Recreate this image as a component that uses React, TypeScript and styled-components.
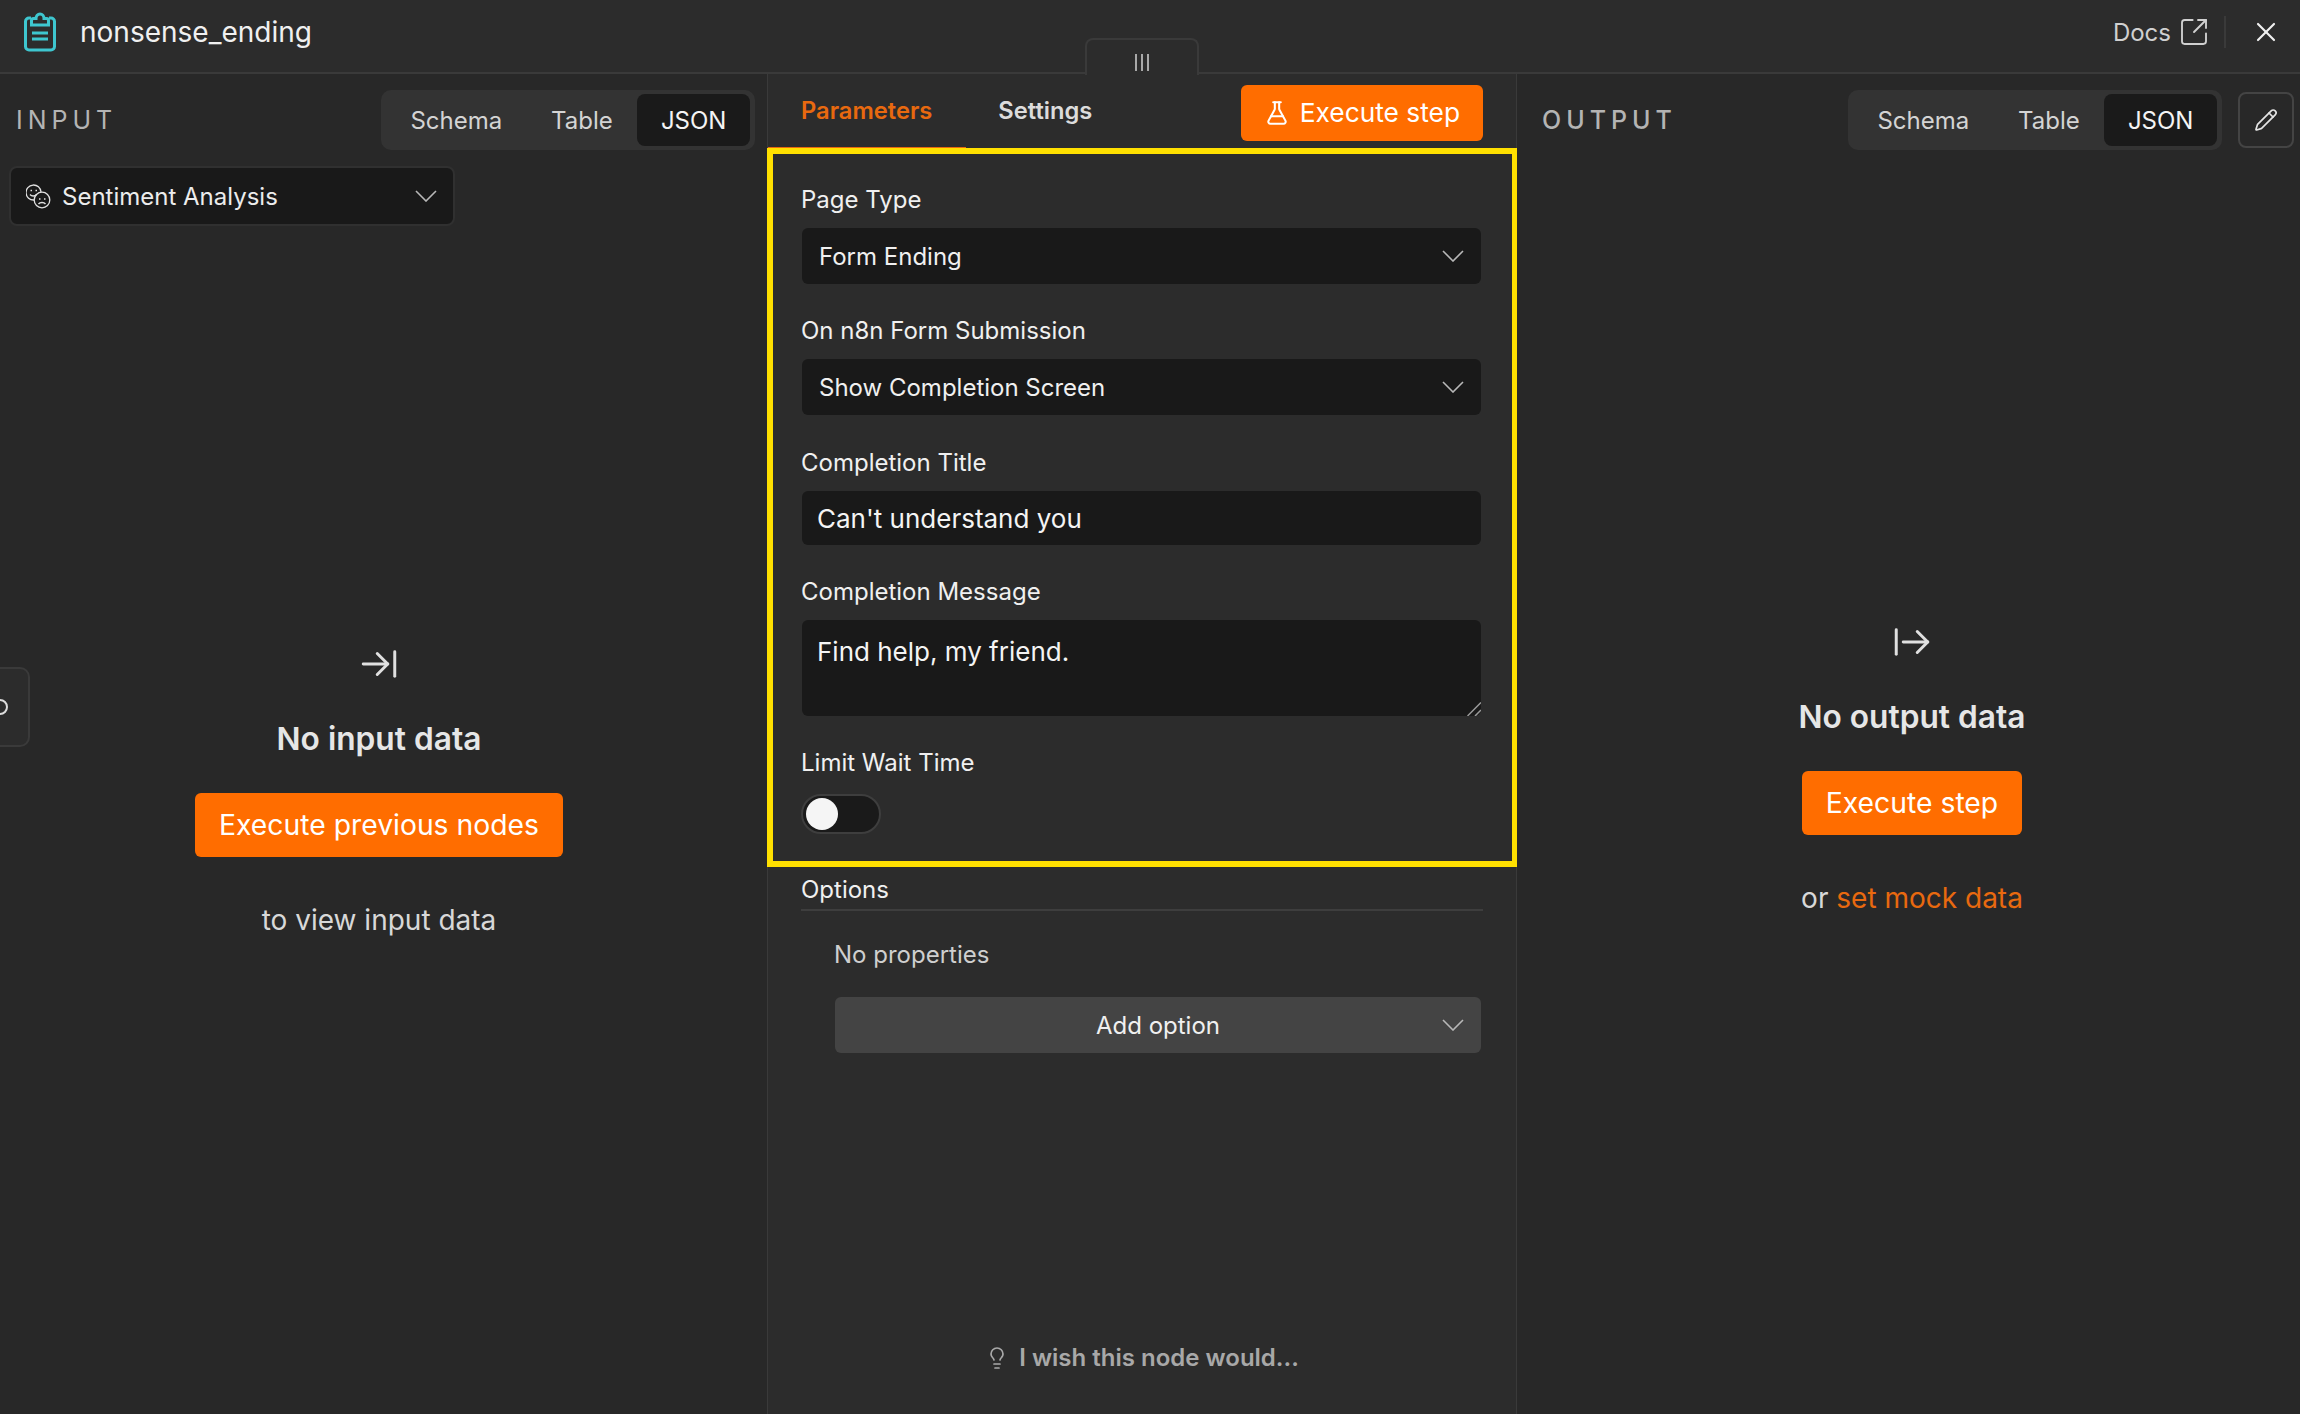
import React from "react";
import styled, { createGlobalStyle } from "styled-components";
import {
  ArrowRightFromLine,
  ArrowRightToLine,
  FlaskConical,
  Lightbulb,
  Pencil,
  SquareArrowOutUpRight,
  X,
} from "lucide-react";

const GlobalStyle = createGlobalStyle`
  html, body {
    margin: 0;
    height: 100%;
    overflow: hidden;
    background: #2c2c2c;
  }
  body, input, textarea {
    font-family: Inter, "Liberation Sans", sans-serif;
  }
  * {
    box-sizing: border-box;
  }
`;

const Page = styled.div`
  position: relative;
  width: 2300px;
  height: 1414px;
  display: flex;
  flex-direction: column;
  background: #2c2c2c;
  color: #f0f0f0;
  font-size: 24px;
  overflow: hidden;
`;

const TopBar = styled.header`
  position: relative;
  flex: none;
  height: 74px;
  display: flex;
  align-items: center;
  justify-content: space-between;
  padding: 0 18px 8px 24px;
  border-bottom: 2px solid #3a3a3a;
`;

const TitleGroup = styled.div`
  display: flex;
  align-items: center;
  gap: 24px;
`;

const NodeTitle = styled.div`
  font-size: 28px;
  color: #f0f0f0;
`;

const TopActions = styled.div`
  display: flex;
  align-items: center;
`;

const DocsLink = styled.div`
  display: flex;
  align-items: center;
  gap: 7px;
  color: #d0d0d0;
  padding-right: 14px;
  border-right: 2px solid #3a3a3a;
  height: 32px;
`;

const CloseIcon = styled(X)`
  margin-left: 24px;
  color: #f0f0f0;
`;

const DragHandle = styled.div`
  position: absolute;
  left: 1085px;
  top: 38px;
  width: 114px;
  height: 37px;
  display: flex;
  justify-content: center;
  align-items: center;
  gap: 4px;
  padding-top: 10px;
  background: #2c2c2c;
  border: 2px solid #3a3a3a;
  border-bottom: none;
  border-radius: 8px 8px 0 0;
`;

const HandleLine = styled.span`
  width: 2px;
  height: 17px;
  background: #a8a8a8;
`;

const Columns = styled.div`
  flex: 1;
  display: flex;
  min-height: 0;
`;

const SidePanel = styled.section<{ $width: number; $left: number; $right: number }>`
  width: ${(p) => p.$width}px;
  flex: none;
  display: flex;
  flex-direction: column;
  background: #282828;
  padding: 16px ${(p) => p.$right}px 0 ${(p) => p.$left}px;
`;

const PanelHead = styled.div`
  display: flex;
  align-items: center;
  justify-content: space-between;
`;

const PanelTitle = styled.div<{ $bright?: boolean }>`
  font-size: 25px;
  letter-spacing: 5px;
  color: #b4b4b4;
  font-weight: ${(p) => (p.$bright ? 500 : 400)};
`;

const HeadRight = styled.div`
  display: flex;
  align-items: center;
  gap: 16px;
`;

const Tabs = styled.div`
  width: 374px;
  height: 60px;
  display: flex;
  align-items: center;
  justify-content: flex-end;
  padding: 0 5px;
  background: #333333;
  border-radius: 10px;
`;

const Tab = styled.div<{ $active?: boolean; $width: number }>`
  width: ${(p) => p.$width}px;
  height: 52px;
  display: flex;
  align-items: center;
  justify-content: center;
  border-radius: 8px;
  color: ${(p) => (p.$active ? "#f4f4f4" : "#d4d4d4")};
  background: ${(p) => (p.$active ? "#1a1a1a" : "transparent")};
`;

const EditButton = styled.div`
  width: 56px;
  height: 56px;
  display: flex;
  align-items: center;
  justify-content: center;
  margin-right: 1px;
  border: 2px solid #444444;
  border-radius: 8px;
  color: #e4e4e4;
`;

const NodePicker = styled.div`
  width: 446px;
  height: 60px;
  margin: 16px 0 0 -7px;
  display: flex;
  align-items: center;
  gap: 11px;
  padding: 0 16px 0 15px;
  background: #191919;
  border: 2px solid #303030;
  border-radius: 8px;
  color: #ececec;
`;

const PickerText = styled.span`
  flex: 1;
`;

const EmptyState = styled.div<{ $top: number }>`
  display: flex;
  flex-direction: column;
  align-items: center;
  margin: ${(p) => p.$top}px 13px 0 0;
`;

const EmptyTitle = styled.div`
  margin-top: 34px;
  font-size: 31.7px;
  font-weight: 600;
  color: #e6e6e6;
`;

const PrimaryButton = styled.div`
  margin-top: 35px;
  height: 64px;
  padding: 0 24px;
  display: flex;
  align-items: center;
  background: #ff6d00;
  border-radius: 6px;
  color: #ffffff;
  font-size: 28.3px;
`;

const EmptyHint = styled.div`
  margin-top: 46px;
  font-size: 28px;
  color: #d8d8d8;
`;

const Accent = styled.span`
  color: #e8690f;
`;

const CenterPanel = styled.section`
  width: 750px;
  flex: none;
  display: flex;
  flex-direction: column;
  background: #2c2c2c;
  border-left: 1px solid #3a3a3a;
  border-right: 1px solid #3a3a3a;
`;

const CenterHead = styled.div`
  height: 73px;
  flex: none;
  display: flex;
  align-items: center;
  padding: 0 33px;
`;

const ModeTab = styled.div<{ $active?: boolean }>`
  margin-right: 66px;
  font-size: 23.7px;
  font-weight: 600;
  color: ${(p) => (p.$active ? "#e8690f" : "#dcdcdc")};
`;

const ActiveMark = styled.div`
  flex: none;
  width: 198px;
  height: 1px;
  background: #e8690f;
`;

const ExecuteButton = styled(PrimaryButton)`
  margin: 4px 0 0 auto;
  height: 56px;
  padding: 0 23px;
  gap: 10px;
  font-size: 26.3px;
`;

const Highlight = styled.div`
  margin: 0 -3px 0 -1px;
  height: 719px;
  flex: none;
  display: flex;
  flex-direction: column;
  padding: 31px 31px 0 28px;
  border: 6px solid #ffe000;
  border-right-width: 7px;
`;

const FieldLabel = styled.div`
  height: 30px;
  line-height: 30px;
  margin-bottom: 13px;
`;

const SelectBox = styled.div<{ $gap: number }>`
  height: 56px;
  margin: 0 0 ${(p) => p.$gap}px 1px;
  flex: none;
  display: flex;
  align-items: center;
  justify-content: space-between;
  padding: 0 17px;
  background: #191919;
  border-radius: 6px;
  color: #f0f0f0;
`;

const TextField = styled.input`
  height: 54px;
  margin: 0 0 32px 1px;
  padding: 0 15px;
  flex: none;
  border: none;
  outline: none;
  border-radius: 6px;
  background: #191919;
  color: #f4f4f4;
  font-size: 26px;
`;

const TextBlockWrap = styled.div`
  position: relative;
  height: 96px;
  margin: 0 0 32px 1px;
  flex: none;
`;

const TextBlock = styled.textarea`
  display: block;
  width: 100%;
  height: 100%;
  padding: 16px 15px;
  border: none;
  outline: none;
  border-radius: 6px;
  background: #191919;
  color: #f4f4f4;
  font-size: 26px;
  resize: none;
`;

const ResizeGrip = styled.svg`
  position: absolute;
  right: 0;
  bottom: 0;
`;

const Switch = styled.div`
  width: 80px;
  height: 40px;
  margin-top: 3px;
  display: flex;
  align-items: center;
  padding: 0 3px;
  background: #1a1a1a;
  border: 2px solid #3e3e3e;
  border-radius: 20px;
`;

const Knob = styled.span`
  width: 32px;
  height: 32px;
  border-radius: 50%;
  background: #f5f5f5;
`;

const OptionsBlock = styled.div`
  padding: 8px 33px 0;
`;

const OptionsTitle = styled.div`
  height: 36px;
  line-height: 30px;
  border-bottom: 2px solid #3e3e3e;
`;

const NoProps = styled.div`
  margin: 29px 0 0 33px;
  height: 30px;
  line-height: 30px;
  color: #cfcfcf;
`;

const AddOption = styled.div`
  position: relative;
  height: 56px;
  margin: 27px 2px 0 34px;
  display: flex;
  align-items: center;
  justify-content: center;
  background: #444444;
  border-radius: 6px;
  color: #f0f0f0;
`;

const AddChevron = styled.span`
  position: absolute;
  right: 17px;
  display: flex;
`;

const Feedback = styled.div`
  margin-top: auto;
  margin-bottom: 42px;
  display: flex;
  justify-content: center;
  align-items: center;
  gap: 10px;
  font-weight: 600;
  color: #a8a8a8;
`;

const SideTab = styled.div`
  position: absolute;
  left: -10px;
  top: 667px;
  width: 40px;
  height: 80px;
  display: flex;
  align-items: center;
  background: #2c2c2c;
  border: 2px solid #3a3a3a;
  border-radius: 10px;
  overflow: hidden;
`;

const SideGlyph = styled.span`
  width: 16px;
  height: 16px;
  border: 2px solid #dcdcdc;
  border-radius: 50%;
`;

function Chevron() {
  return (
    <svg width="22" height="12" viewBox="0 0 22 12" fill="none">
      <path d="M1 1l10 10L21 1" stroke="#b8b8b8" strokeWidth="1.6" />
    </svg>
  );
}

function ClipboardIcon() {
  return (
    <svg width="32" height="40" viewBox="0 0 32 40" fill="none" stroke="#3ec6cf" strokeWidth="3">
      <path d="M7 6H5a3.500 3.500 0 0 0-3.500 3.500v25A3.500 3.500 0 0 0 5 38h22a3.500 3.500 0 0 0 3.500-3.500v-25A3.500 3.500 0 0 0 27 6h-2" />
      <path d="M7.500 13V8.500a2 2 0 0 1 2-2h2.500a4 4.500 0 0 1 8 0h2.500a2 2 0 0 1 2 2V13z" />
      <path d="M8 21h16M8 27h16" />
    </svg>
  );
}

function SentimentIcon() {
  return (
    <svg width="25" height="26" viewBox="0 0 25 26" fill="none" stroke="#e0e0e0" strokeWidth="1.300">
      <path d="M8 17A7.500 7.500 0 1 1 15 9" />
      <circle cx="16" cy="17" r="7.800" />
      <path d="M4 11.500c1.500 2 5 2 6.500 0M4.500 7.500h1.500M9.500 7.500h1.500" />
      <path d="M12.500 21c1.500-2 5.500-2 7 0M13 16h1.500M18 16h1.500" />
    </svg>
  );
}

export default function App() {
  return (
    <Page>
      <GlobalStyle />
      <TopBar>
        <TitleGroup>
          <ClipboardIcon />
          <NodeTitle>nonsense_ending</NodeTitle>
        </TitleGroup>
        <TopActions>
          <DocsLink>
            Docs
            <SquareArrowOutUpRight size={32} strokeWidth={1.4} />
          </DocsLink>
          <CloseIcon size={32} strokeWidth={1.6} />
        </TopActions>
      </TopBar>
      <DragHandle>
        <HandleLine />
        <HandleLine />
        <HandleLine />
      </DragHandle>
      <SideTab>
        <SideGlyph />
      </SideTab>

      <Columns>
        <SidePanel $width={767} $left={16} $right={12}>
          <PanelHead>
            <PanelTitle>INPUT</PanelTitle>
            <Tabs>
              <Tab $width={141}>Schema</Tab>
              <Tab $width={111}>Table</Tab>
              <Tab $width={113} $active>
                JSON
              </Tab>
            </Tabs>
          </PanelHead>
          <NodePicker>
            <SentimentIcon />
            <PickerText>Sentiment Analysis</PickerText>
            <Chevron />
          </NodePicker>
          <EmptyState $top={417}>
            <ArrowRightToLine size={42} strokeWidth={1.7} color="#e0e0e0" />
            <EmptyTitle>No input data</EmptyTitle>
            <PrimaryButton>Execute previous nodes</PrimaryButton>
            <EmptyHint>to view input data</EmptyHint>
          </EmptyState>
        </SidePanel>

        <CenterPanel>
          <CenterHead>
            <ModeTab $active>Parameters</ModeTab>
            <ModeTab>Settings</ModeTab>
            <ExecuteButton>
              <FlaskConical size={26} strokeWidth={1.9} />
              Execute step
            </ExecuteButton>
          </CenterHead>
          <ActiveMark />
          <Highlight>
            <FieldLabel>Page Type</FieldLabel>
            <SelectBox $gap={32}>
              Form Ending
              <Chevron />
            </SelectBox>
            <FieldLabel>On n8n Form Submission</FieldLabel>
            <SelectBox $gap={33}>
              Show Completion Screen
              <Chevron />
            </SelectBox>
            <FieldLabel>Completion Title</FieldLabel>
            <TextField readOnly defaultValue="Can't understand you" />
            <FieldLabel>Completion Message</FieldLabel>
            <TextBlockWrap>
              <TextBlock readOnly defaultValue="Find help, my friend." />
              <ResizeGrip width="14" height="14" viewBox="0 0 14 14" fill="none" stroke="#9a9a9a" strokeWidth="1.500">
                <path d="M0.500 14L14 0.500M8 14l6-6" />
              </ResizeGrip>
            </TextBlockWrap>
            <FieldLabel>Limit Wait Time</FieldLabel>
            <Switch>
              <Knob />
            </Switch>
          </Highlight>
          <OptionsBlock>
            <OptionsTitle>Options</OptionsTitle>
            <NoProps>No properties</NoProps>
            <AddOption>
              Add option
              <AddChevron>
                <Chevron />
              </AddChevron>
            </AddOption>
          </OptionsBlock>
          <Feedback>
            <Lightbulb size={24} strokeWidth={1.7} />I wish this node would...
          </Feedback>
        </CenterPanel>

        <SidePanel $width={783} $left={25} $right={5}>
          <PanelHead>
            <PanelTitle $bright>OUTPUT</PanelTitle>
            <HeadRight>
              <Tabs>
                <Tab $width={141}>Schema</Tab>
                <Tab $width={111}>Table</Tab>
                <Tab $width={113} $active>
                  JSON
                </Tab>
              </Tabs>
              <EditButton>
                <Pencil size={24} strokeWidth={1.7} />
              </EditButton>
            </HeadRight>
          </PanelHead>
          <EmptyState $top={471}>
            <ArrowRightFromLine size={42} strokeWidth={1.7} color="#e0e0e0" />
            <EmptyTitle>No output data</EmptyTitle>
            <PrimaryButton>Execute step</PrimaryButton>
            <EmptyHint>
              or <Accent>set mock data</Accent>
            </EmptyHint>
          </EmptyState>
        </SidePanel>
      </Columns>
    </Page>
  );
}
